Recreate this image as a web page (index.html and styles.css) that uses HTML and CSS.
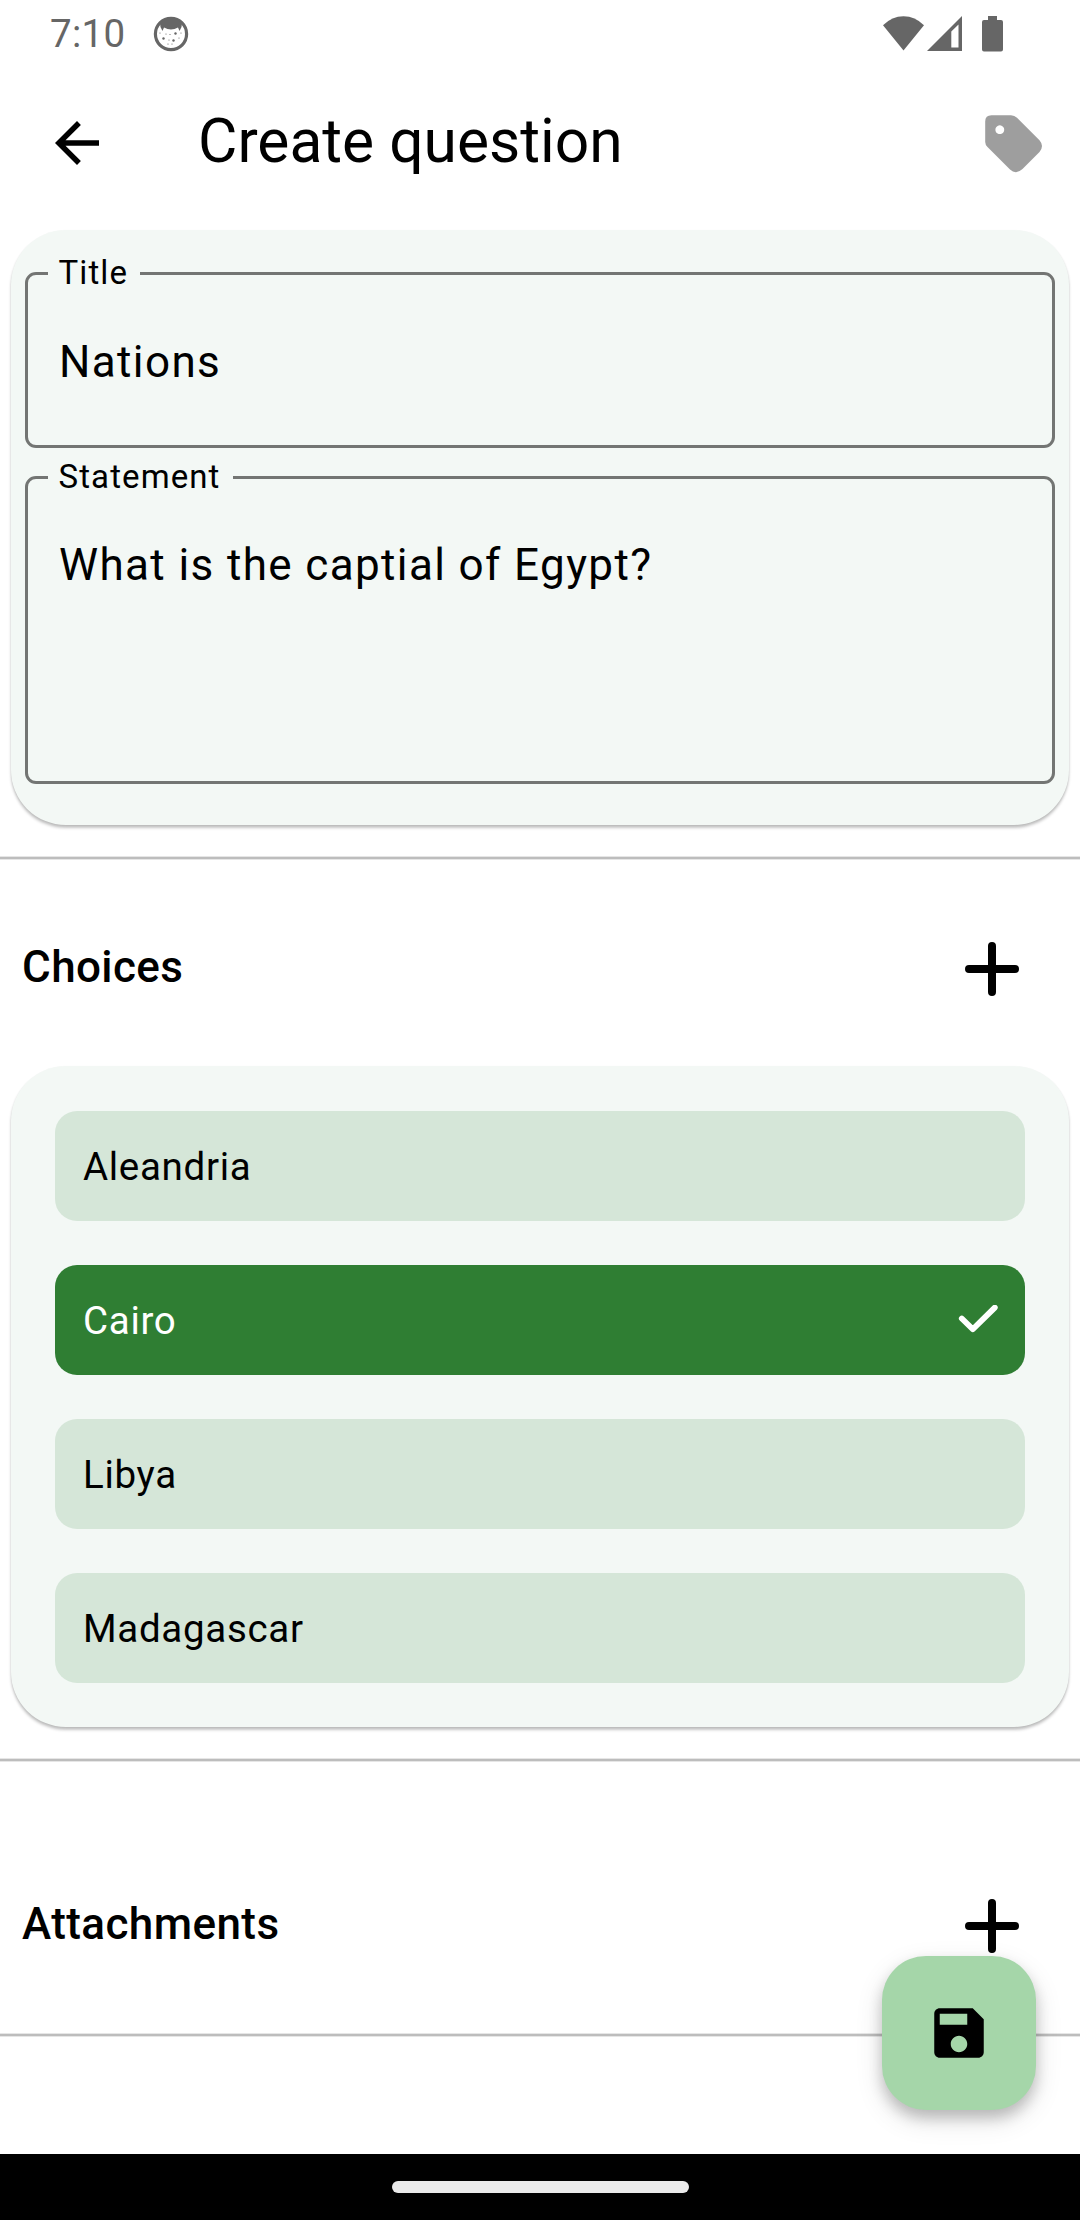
FILE: index.html
```html
<!DOCTYPE html>
<html lang="en">
<head>
<meta charset="utf-8">
<title>Create question</title>
<link rel="stylesheet" href="styles.css">
</head>
<body>
<div class="screen">
  <header class="status">
    <span class="clock">7:10</span>
    <svg class="face" width="36" height="36" viewBox="0 0 36 36">
      <circle cx="18" cy="18" r="15.6" fill="none" stroke="#666" stroke-width="3.2"/>
      <path d="M7 7Q18-2 29 7L28.500 11 26.500 15 25 11.500Q18 15.500 11 11.500L9.500 15 7.500 11Z" fill="#666"/>
      <g fill="#666"><circle cx="10.500" cy="22.500" r="1.200"/><circle cx="22.500" cy="17.500" r="1.200"/><circle cx="20.500" cy="24.500" r="1.200"/><circle cx="13" cy="18" r=".6"/><circle cx="7" cy="17" r=".6"/><circle cx="16" cy="24" r=".6"/><circle cx="26" cy="22" r=".6"/><circle cx="19" cy="28" r=".6"/><circle cx="15" cy="28" r=".6"/><circle cx="28" cy="17" r=".6"/><circle cx="17" cy="18.500" r=".6"/></g>
    </svg>
    <svg class="signals" width="122" height="38" viewBox="882 14 122 38" fill="#666">
      <path d="M883 24.300Q892 15.300 903.500 15.300T924 24.300L903.500 49.500Z"/>
      <path fill-rule="evenodd" d="M927 50 962 15V50ZM951.300 30.500V46.500H958.500V23.500Z"/>
      <path d="M988 15h9v4h4a2 2 0 0 1 2 2v27.500a2 2 0 0 1-2 2h-17a2 2 0 0 1-2-2V21a2 2 0 0 1 2-2h4z"/>
    </svg>
  </header>
  <nav class="appbar">
    <svg width="66" height="66" viewBox="0 0 24 24"><path d="M20 11H7.830l5.590-5.590L12 4l-8 8 8 8 1.410-1.410L7.830 13H20v-2z"/></svg>
    <h1>Create question</h1>
    <svg class="tag" width="58" height="58" viewBox="0 0 58 58"><path fill="#9e9e9e" fill-rule="evenodd" d="M6.500.300H26Q29.500.300 32 2.800L54.500 25.200Q59.500 31 54.500 37L37.500 54Q31 60 25 54.500L2.500 32Q.200 29.500.200 27V6.500Q.200.300 6.500.300ZM14.800 10.300a4.400 4.400 0 1 0 .001 0Z"/></svg>
  </nav>
  <main>
    <section class="card form">
      <fieldset class="field title"><legend>Title</legend><p>Nations</p></fieldset>
      <fieldset class="field statement"><legend>Statement</legend><p>What is the captial of Egypt?</p></fieldset>
    </section>
    <hr>
    <div class="heading choices-heading"><h2>Choices</h2><svg width="54" height="54" viewBox="0 0 54 54"><path class="plus" d="M27 4V50M4 27H50"/></svg></div>
    <ul class="card choices">
      <li>Aleandria</li>
      <li class="correct">Cairo<svg width="40" height="30" viewBox="958 1305 40 30"><path class="check" d="M961.800 1318.500 972.800 1329.300 994.800 1307.600"/></svg></li>
      <li>Libya</li>
      <li>Madagascar</li>
    </ul>
    <hr>
    <div class="heading attachments-heading"><h2>Attachments</h2><svg width="54" height="54" viewBox="0 0 54 54"><path class="plus" d="M27 4V50M4 27H50"/></svg></div>
    <hr>
  </main>
  <button class="fab" aria-label="Save"><svg width="66" height="66" viewBox="0 0 24 24"><path d="M17 3H5c-1.110 0-2 .9-2 2v14c0 1.100.89 2 2 2h14c1.100 0 2-.9 2-2V7l-4-4zm-5 16c-1.660 0-3-1.340-3-3s1.340-3 3-3 3 1.340 3 3-1.340 3-3 3zm3-10H5V5h10v4z"/></svg></button>
  <footer class="navbar"><span></span></footer>
</div>
</body>
</html>
```
FILE: styles.css
```css
* { box-sizing: border-box; margin: 0; padding: 0; }
body { font-family: Roboto, "Liberation Sans", sans-serif; background: #fff; color: #000; }
svg { display: block; flex: none; }
.screen { position: relative; width: 1080px; height: 2220px; display: flex; flex-direction: column; overflow: hidden; }

.status { height: 66px; display: flex; align-items: center; padding: 1px 76px 0 50px; color: #666; }
.clock { font-size: 38.5px; line-height: 44px; width: 103px; padding-top: 1px; letter-spacing: 0.3px; }
.signals { margin-left: auto; }

.appbar { height: 154px; display: flex; align-items: center; padding: 0 37px 0 44px; }
.appbar h1 { font-size: 60.5px; font-weight: 400; line-height: 78px; margin-left: 88px; padding-bottom: 2px; }
.tag { margin: 2px 0 0 auto; }

main { flex: 1; padding-top: 10px; }
.card { margin: 0 11px; background: #f3f8f5; border-radius: 55px; box-shadow: 0 3px 3px rgba(0, 0, 0, .22), 0 1px 2px rgba(0, 0, 0, .08); }
.form { height: 595px; padding: 24px 14px 0; }
.field { border: 3px solid #737573; border-radius: 11px; padding-left: 20px; }
.field legend { font-size: 33px; line-height: 38px; padding: 0 12px 0 10.5px; letter-spacing: 1.1px; }
.field p { font-size: 44px; line-height: 66px; padding-left: 11px; letter-spacing: 1.38px; }
.title { height: 194px; }
.title p { padding-top: 37px; }
.statement { height: 326px; margin-top: 10px; }
.statement p { padding-top: 36px; }

hr { height: 4px; border: solid #e6e6e6; border-width: 1px 0; background: #bdbdbd; margin-top: 31px; }
.heading { display: flex; align-items: center; justify-content: space-between; padding: 0 61px 0 22px; }
.heading h2 { font-size: 44px; font-weight: 500; line-height: 66px; padding-bottom: 4px; letter-spacing: .41px; }
.choices-heading { height: 206px; padding-top: 12px; }
.attachments-heading { height: 271px; padding-top: 57px; }
.attachments-heading + hr { margin-top: 0; }
.plus { stroke: #000; stroke-width: 8px; stroke-linecap: round; }

.choices { height: 661px; padding: 45px 44px 44px; list-style: none; display: flex; flex-direction: column; gap: 44px; }
.choices li { height: 110px; border-radius: 22px; background: #d5e6d8; padding: 0 27px 0 28px; display: flex; align-items: center; justify-content: space-between; font-size: 38.5px; letter-spacing: .69px; }
.choices .correct { background: #2f7e33; color: #fff; }
.check { fill: none; stroke: #fff; stroke-width: 5.8px; stroke-linecap: round; stroke-linejoin: round; }

.fab { position: absolute; left: 882px; top: 1956px; width: 154px; height: 154px; border: 0; border-radius: 44px; background: #a5d6a9; display: grid; place-items: center; box-shadow: 0 8px 14px rgba(0, 0, 0, .2), 0 10px 28px rgba(0, 0, 0, .12); }
.navbar { height: 66px; background: #000; display: flex; align-items: center; justify-content: center; }
.navbar span { width: 297px; height: 12px; border-radius: 6px; background: #eaeaea; }
```
